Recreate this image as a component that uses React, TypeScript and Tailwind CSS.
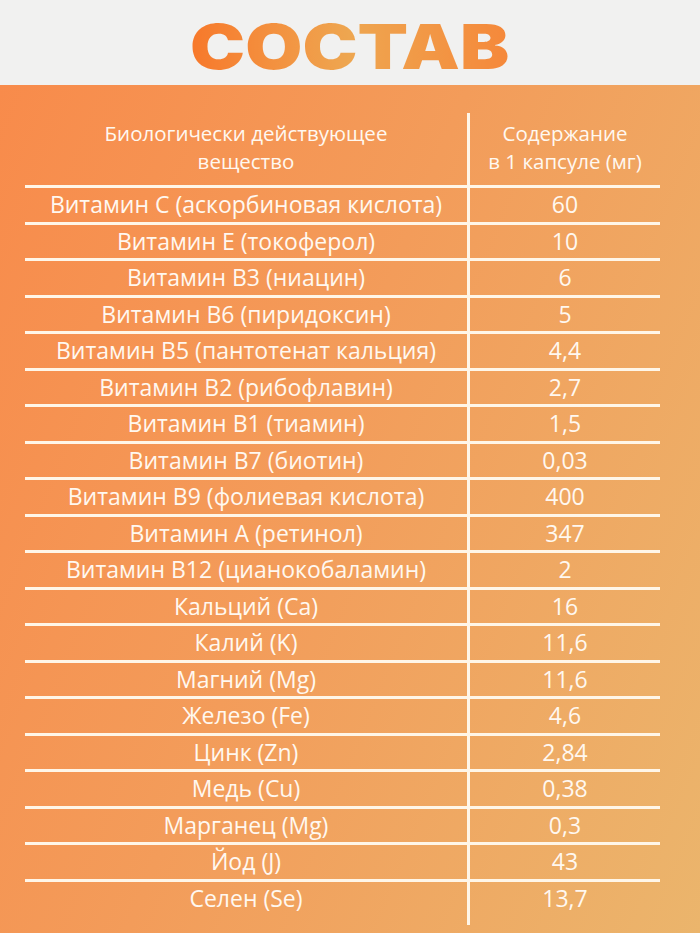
import React from "react";

const rows: [string, string][] = [
  ["Витамин С (аскорбиновая кислота)", "60"],
  ["Витамин Е (токоферол)", "10"],
  ["Витамин В3 (ниацин)", "6"],
  ["Витамин В6 (пиридоксин)", "5"],
  ["Витамин В5 (пантотенат кальция)", "4,4"],
  ["Витамин В2 (рибофлавин)", "2,7"],
  ["Витамин В1 (тиамин)", "1,5"],
  ["Витамин В7 (биотин)", "0,03"],
  ["Витамин В9 (фолиевая кислота)", "400"],
  ["Витамин А (ретинол)", "347"],
  ["Витамин В12 (цианокобаламин)", "2"],
  ["Кальций (Ca)", "16"],
  ["Калий (K)", "11,6"],
  ["Магний (Mg)", "11,6"],
  ["Железо (Fe)", "4,6"],
  ["Цинк (Zn)", "2,84"],
  ["Медь (Cu)", "0,38"],
  ["Марганец (Mg)", "0,3"],
  ["Йод (J)", "43"],
  ["Селен (Se)", "13,7"],
];

export default function App() {
  return (
    <div className="w-[700px] h-[933px] overflow-hidden flex flex-col" style={{ fontFamily: "'Open Sans', sans-serif" }}>
      <div className="h-[85px] bg-[#f1f1f0] flex items-center justify-center pt-[8px] shrink-0">
        <span
          className="inline-block scale-x-[1.25] scale-y-[1.05] text-[59px] leading-none font-black bg-gradient-to-r from-[#f7782a] via-[#eea650] to-[#f5883a] bg-clip-text text-transparent"
          style={{ fontFamily: "Inter, sans-serif" }}
        >
          СОСТАВ
        </span>
      </div>
      <div className="flex-1 bg-[linear-gradient(112deg,#f88b4b_0%,#f39c5a_45%,#ebb56c_100%)] pt-[28px] pl-[25px] text-[#fff8f0]">
        <div className="w-[635px]">
          <div className="flex h-[72px]">
            <div className="w-[442px] flex items-center justify-center text-center text-[20.5px] leading-[28px] pb-[4px]">
              Биологически действующее
              <br />
              вещество
            </div>
            <div className="flex-1 border-l-[3px] border-[#fff6e8] flex items-center justify-center text-center text-[20.5px] leading-[28px] pb-[4px]">
              Содержание
              <br />в 1 капсуле (мг)
            </div>
          </div>
          {rows.map(([name, val]) => (
            <div key={name} className="flex h-[36.5px] border-t-[3px] border-[#fff6e8]">
              <div className="w-[442px] flex items-center justify-center text-[23px] leading-none">{name}</div>
              <div className="flex-1 border-l-[3px] border-[#fff6e8] flex items-center justify-center text-[23px] leading-none">
                {val}
              </div>
            </div>
          ))}
          <div className="flex h-[10px]">
            <div className="w-[442px]" />
            <div className="flex-1 border-l-[3px] border-[#fff6e8]" />
          </div>
        </div>
      </div>
    </div>
  );
}
